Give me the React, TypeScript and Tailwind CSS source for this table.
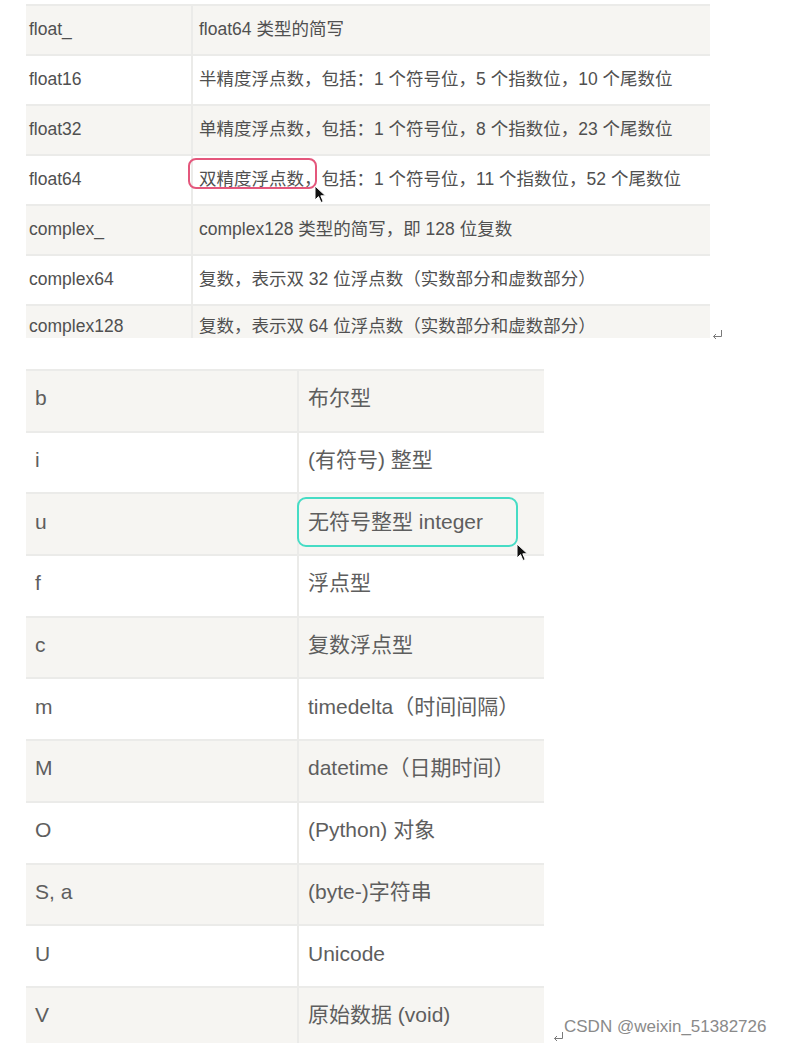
import React from "react";

const font = { fontFamily: '"Liberation Sans", "Noto Sans CJK SC", sans-serif' };

const t1: [string, string][] = [
  ["float_", "float64 类型的简写"],
  ["float16", "半精度浮点数，包括：1 个符号位，5 个指数位，10 个尾数位"],
  ["float32", "单精度浮点数，包括：1 个符号位，8 个指数位，23 个尾数位"],
  ["float64", "双精度浮点数，包括：1 个符号位，11 个指数位，52 个尾数位"],
  ["complex_", "complex128 类型的简写，即 128 位复数"],
  ["complex64", "复数，表示双 32 位浮点数（实数部分和虚数部分）"],
  ["complex128", "复数，表示双 64 位浮点数（实数部分和虚数部分）"],
];

const t2: [string, string][] = [
  ["b", "布尔型"],
  ["i", "(有符号) 整型"],
  ["u", "无符号整型 integer"],
  ["f", "浮点型"],
  ["c", "复数浮点型"],
  ["m", "timedelta（时间间隔）"],
  ["M", "datetime（日期时间）"],
  ["O", "(Python) 对象"],
  ["S, a", "(byte-)字符串"],
  ["U", "Unicode"],
  ["V", "原始数据 (void)"],
];

function Cursor({ className }: { className: string }) {
  return (
    <svg className={className} width="13" height="19" viewBox="0 0 13 19">
      <path
        d="M1 1 L1 15 L4.5 11.6 L7 17.5 L9.2 16.5 L6.8 10.8 L11.5 10.8 Z"
        fill="#111"
        stroke="#fff"
        strokeWidth="1"
        strokeLinejoin="round"
      />
    </svg>
  );
}

function ReturnMark({ className }: { className?: string }) {
  return (
    <svg className={className} width="11" height="11" viewBox="0 0 11 11">
      <path d="M9.5 1 V7.5 H1.5" fill="none" stroke="#7a7a7a" strokeWidth="1" />
      <path d="M4 5 L1.5 7.5 L4 10" fill="none" stroke="#7a7a7a" strokeWidth="1" />
    </svg>
  );
}

export default function App() {
  return (
    <div className="w-[785px] h-[1043px] overflow-hidden bg-white" style={font}>
      {/* Table 1 */}
      <div className="flex items-end pt-[4px] pl-[26px]">
        <div className="w-[684px] text-[17.5px] text-[#505050]">
          {t1.map(([a, b], i) => {
            const last = i === t1.length - 1;
            return (
              <div
                key={a}
                className={`flex border-t-2 border-[#ebebe9] ${
                  i % 2 === 0 ? "bg-[#f6f5f2]" : "bg-white"
                } ${last ? "h-[34px]" : "h-[50px]"}`}
              >
                <div
                  className={`w-[167px] shrink-0 border-r-2 border-[#ebebe9] pl-[3px] flex ${
                    last ? "items-start pt-[8px]" : "items-center pb-[2px]"
                  }`}
                >
                  <span className="leading-[24px]">{a}</span>
                </div>
                <div
                  className={`relative flex-1 pl-[6px] flex ${
                    last ? "items-start pt-[8px]" : "items-center pb-[2px]"
                  }`}
                >
                  <span className="leading-[24px] whitespace-nowrap">{b}</span>
                  {a === "float64" && (
                    <>
                      <div className="absolute left-[-5px] top-[2px] w-[129px] h-[31px] border-2 border-[#e4577c] rounded-[8px]" />
                      <Cursor className="absolute left-[121px] top-[29px]" />
                    </>
                  )}
                </div>
              </div>
            );
          })}
        </div>
        <ReturnMark className="ml-[2px] mb-[-2px]" />
      </div>

      {/* Table 2 */}
      <div className="flex items-end pt-[31px] pl-[26px]">
        <div className="w-[518px] shrink-0 text-[21px] text-[#5e5e5e]">
          {t2.map(([a, b], i) => (
            <div
              key={a}
              className={`flex h-[61.7px] border-t-2 border-[#ebebe9] ${
                i % 2 === 0 ? "bg-[#f6f5f2]" : "bg-white"
              }`}
            >
              <div className="w-[273px] shrink-0 border-r-2 border-[#ebebe9] pl-[9px] flex items-center pb-[5px]">
                <span className="leading-[26px]">{a}</span>
              </div>
              <div className="relative flex-1 pl-[9px] flex items-center pb-[5px]">
                <span className="leading-[26px] whitespace-nowrap">{b}</span>
                {a === "u" && (
                  <>
                    <div className="absolute left-[-2px] top-[3px] w-[221px] h-[50px] border-2 border-[#46dcc5] rounded-[9px]" />
                    <Cursor className="absolute left-[217px] top-[49px]" />
                  </>
                )}
              </div>
            </div>
          ))}
        </div>
        <div className="flex items-end mb-[11px] ml-[9px] whitespace-nowrap">
          <ReturnMark className="mb-[-5px]" />
          <span className="text-[17px] leading-[20px] text-[#8a8a8a]">CSDN @weixin_51382726</span>
        </div>
      </div>
    </div>
  );
}
